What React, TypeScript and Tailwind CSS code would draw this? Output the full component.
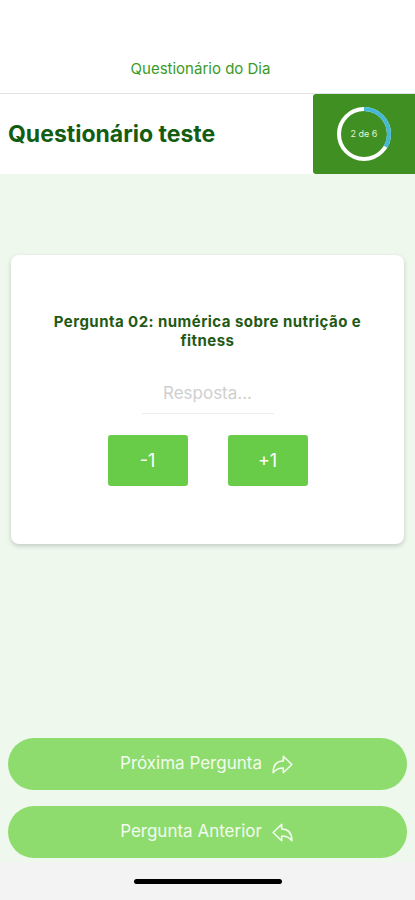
import { IoArrowRedoOutline, IoArrowUndoOutline } from "react-icons/io5";

function ProgressRing({ current, total }: { current: number; total: number }) {
  const r = 25;
  const c = 2 * Math.PI * r;
  const done = (current / total) * c;
  return (
    <div className="relative h-[58px] w-[58px]">
      <svg width="58" height="58" viewBox="0 0 58 58" className="-rotate-90">
        <circle cx="29" cy="29" r={r} fill="none" stroke="#ffffff" strokeWidth="4" />
        <circle
          cx="29"
          cy="29"
          r={r}
          fill="none"
          stroke="#45b9d3"
          strokeWidth="4"
          strokeDasharray={`${done} ${c}`}
        />
      </svg>
      <span className="absolute inset-0 flex items-center justify-center text-[9px] text-[#e3f5dc]">
        {current} de {total}
      </span>
    </div>
  );
}

export default function App() {
  return (
    <div
      className="flex h-[900px] w-[415px] flex-col bg-[#f3f3f3]"
      style={{ fontFamily: "Inter, 'Noto Sans', sans-serif" }}
    >
      {/* nav title */}
      <div className="flex h-[93px] items-end justify-center bg-white pr-[14px] pb-[13px]">
        <span className="text-[15px] text-[#3a9a26]">Questionário do Dia</span>
      </div>
      <div className="h-px bg-[#e3e3e3]" />

      {/* quiz header */}
      <div className="flex h-[80px] items-stretch bg-white">
        <h1 className="flex flex-1 items-center pl-2 text-[23px] font-bold text-[#135d12]">
          Questionário teste
        </h1>
        <div className="flex w-[102px] items-center justify-center rounded-l-[3px] bg-[#3f8f22]">
          <ProgressRing current={2} total={6} />
        </div>
      </div>

      {/* body */}
      <div className="flex h-[688px] flex-col bg-[#eef8ec] px-2 pt-[81px]">
        <div className="mx-[3px] flex h-[289px] flex-col items-center rounded-lg bg-white px-9 pt-[57px] shadow-[0_2px_5px_rgba(0,0,0,0.18)]">
          <p className="text-center text-[15px] font-bold leading-[19px] tracking-[0.03em] text-[#1f5a15]">
            Pergunta 02: numérica sobre nutrição e fitness
          </p>
          <div className="mt-[31px] w-[132px] border-b border-[#ececec] pb-[6px] text-center text-[17px] text-[#cfcfcf]">
            Resposta...
          </div>
          <div className="mt-[21px] flex gap-[40px]">
            <button className="flex h-[51px] w-[80px] items-center justify-center rounded-[3px] bg-[#69cc49] text-[18px] text-white">
              -1
            </button>
            <button className="flex h-[51px] w-[80px] items-center justify-center rounded-[3px] bg-[#69cc49] text-[18px] text-white">
              +1
            </button>
          </div>
        </div>

        <div className="mt-auto mb-[4px] flex flex-col gap-4">
          <button className="flex h-[52px] items-center justify-center gap-2 rounded-full bg-[#8fdc6e] text-[17px] text-[#f2fbee]">
            Próxima Pergunta
            <IoArrowRedoOutline className="h-[25px] w-[25px]" />
          </button>
          <button className="flex h-[52px] items-center justify-center gap-2 rounded-full bg-[#8fdc6e] text-[17px] text-[#f2fbee]">
            Pergunta Anterior
            <IoArrowUndoOutline className="h-[25px] w-[25px]" />
          </button>
        </div>
      </div>

      {/* home indicator */}
      <div className="flex flex-1 items-center justify-center">
        <div className="h-[5px] w-[148px] rounded-full bg-black" />
      </div>
    </div>
  );
}
